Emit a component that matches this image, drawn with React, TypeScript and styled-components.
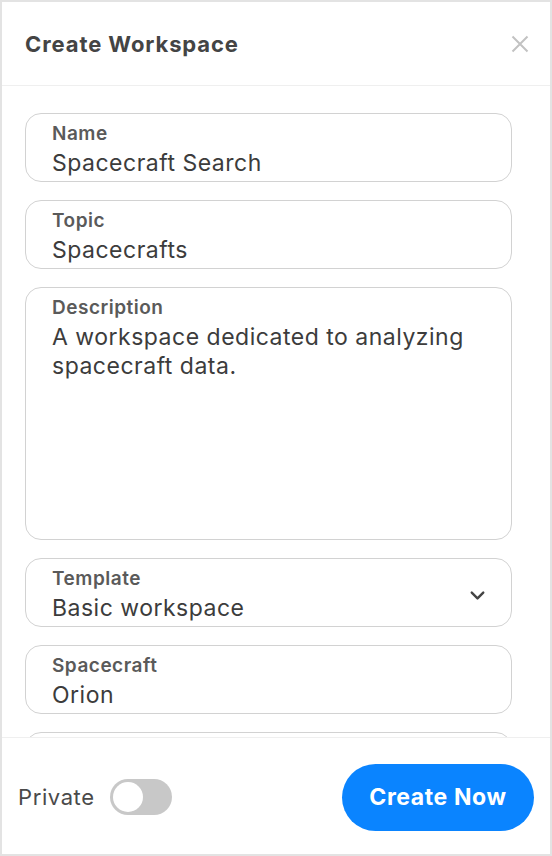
import React from "react";
import styled, { createGlobalStyle } from "styled-components";

const GlobalStyle = createGlobalStyle`
  html, body {
    margin: 0;
    padding: 0;
    background: #ffffff;
  }
  body {
    font-family: Inter, "Noto Sans", "Liberation Sans", sans-serif;
  }
  * {
    box-sizing: border-box;
  }
`;

interface FieldProps {
  label?: string;
  value?: React.ReactNode;
  tall?: boolean;
  select?: boolean;
}

const Field: React.FC<FieldProps> = ({ label, value, tall, select }) => (
  <FieldBox>
    <FieldText>
      <Label>{label}</Label>
      <Value $tall={tall}>{value}</Value>
    </FieldText>
    {select && (
      <Chevron viewBox="0 0 24 24" aria-hidden>
        <path d="M6 9l6 6 6-6" />
      </Chevron>
    )}
  </FieldBox>
);

const App: React.FC = () => {
  return (
    <>
      <GlobalStyle />
      <Modal>
        <Header>
          <Title>Create Workspace</Title>
          <CloseButton aria-label="Close">
            <svg viewBox="0 0 18 18" width="18" height="18">
              <path d="M1.5 1.5l15 15M16.5 1.5l-15 15" />
            </svg>
          </CloseButton>
        </Header>
        <Body>
          <Field label="Name" value="Spacecraft Search" />
          <Field label="Topic" value="Spacecrafts" />
          <Field
            label="Description"
            value="A workspace dedicated to analyzing spacecraft data."
            tall
          />
          <Field label="Template" value="Basic workspace" select />
          <Field label="Spacecraft" value="Orion" />
          {/* next field is scrolled below the footer */}
          <Field />
        </Body>
        <Footer>
          <PrivateToggle>
            <PrivateLabel>Private</PrivateLabel>
            <Track>
              <Knob />
            </Track>
          </PrivateToggle>
          <CreateButton>Create Now</CreateButton>
        </Footer>
      </Modal>
    </>
  );
};

export default App;

/**
 *
 * Styles
 *
 */

const Modal = styled.div`
  width: 552px;
  height: 856px;
  display: flex;
  flex-direction: column;
  border: 2px solid #e3e3e3;
  background: #ffffff;
  overflow: hidden;
`;

const Header = styled.div`
  height: 84px;
  flex-shrink: 0;
  display: flex;
  align-items: center;
  justify-content: space-between;
  padding: 0 21px 0 23px;
  border-bottom: 1px solid #efefef;
`;

const Title = styled.h2`
  margin: 0;
  font-size: 22px;
  font-weight: 700;
  color: #444444;
  letter-spacing: 0.9px;
`;

const CloseButton = styled.button`
  border: none;
  background: none;
  padding: 0;
  width: 18px;
  height: 18px;
  cursor: pointer;
  svg path {
    stroke: #c2c2c2;
    stroke-width: 2;
    fill: none;
  }
`;

const Body = styled.div`
  flex: 1;
  min-height: 0;
  overflow: hidden;
  display: flex;
  flex-direction: column;
  gap: 18px;
  padding: 27px 38px 0 23px;
`;

const FieldBox = styled.div`
  flex-shrink: 0;
  display: flex;
  align-items: center;
  border: 1px solid #d2d2d2;
  border-radius: 16px;
  padding: 9px 26px 3px 26px;
`;

const FieldText = styled.div`
  flex: 1;
  display: flex;
  flex-direction: column;
  align-self: flex-start;
`;

const Label = styled.span`
  font-size: 19px;
  line-height: 22px;
  min-height: 22px;
  font-weight: 600;
  color: #5a5a5a;
  letter-spacing: 0.5px;
  margin-bottom: 4px;
`;

const Value = styled.div<{ $tall?: boolean }>`
  font-size: 23px;
  line-height: 29px;
  color: #3c3c3c;
  letter-spacing: 0.5px;
  min-height: ${({ $tall }) => ($tall ? "213px" : "29px")};
`;

const Chevron = styled.svg`
  width: 23px;
  height: 23px;
  margin-right: -4px;
  fill: none;
  stroke: #444444;
  stroke-width: 2.5;
  stroke-linecap: round;
  stroke-linejoin: round;
`;

const Footer = styled.div`
  height: 117px;
  flex-shrink: 0;
  display: flex;
  align-items: center;
  justify-content: space-between;
  padding: 2px 16px 0 16px;
  border-top: 1px solid #efefef;
`;

const PrivateToggle = styled.label`
  display: flex;
  align-items: center;
  gap: 15px;
`;

const PrivateLabel = styled.span`
  font-size: 22px;
  color: #4a4a4a;
  letter-spacing: 0.6px;
`;

const Track = styled.span`
  width: 62px;
  height: 36px;
  border-radius: 18px;
  background: #c8c8c8;
  display: flex;
  align-items: center;
  padding: 0 3px;
`;

const Knob = styled.span`
  width: 30px;
  height: 30px;
  border-radius: 50%;
  background: #ffffff;
`;

const CreateButton = styled.button`
  height: 67px;
  width: 192px;
  border: none;
  border-radius: 34px;
  background: #0a84ff;
  color: #ffffff;
  font-family: inherit;
  font-size: 23px;
  font-weight: 700;
  letter-spacing: 0.6px;
  cursor: pointer;
`;
